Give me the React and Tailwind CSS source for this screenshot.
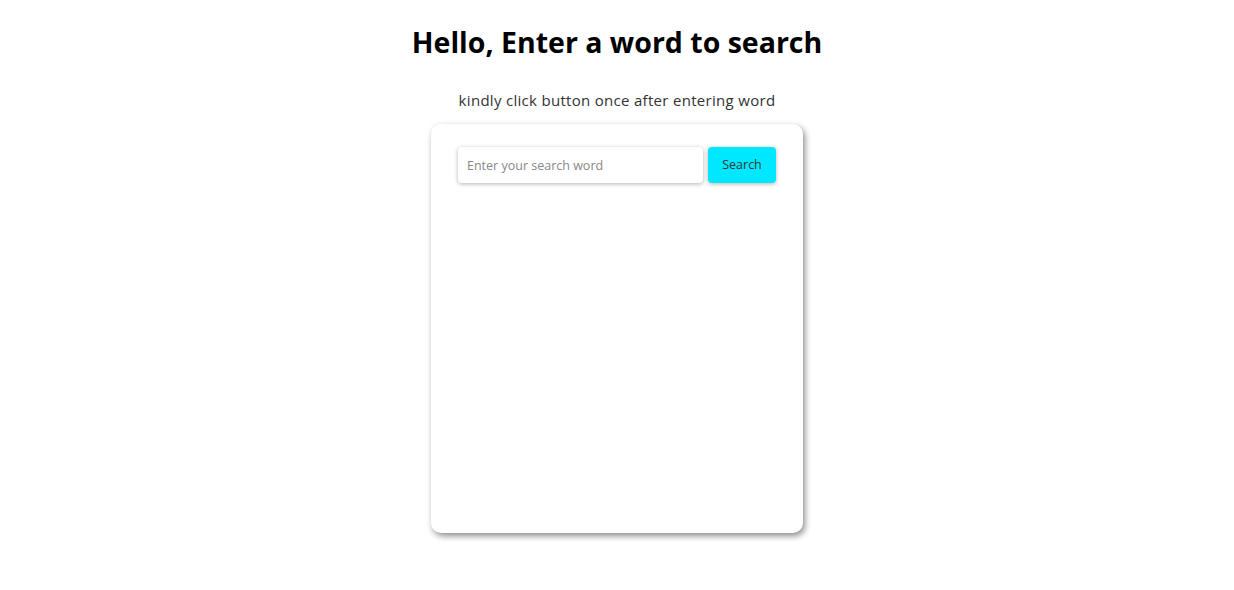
export default function App() {
  return (
    <div className="min-h-screen bg-white flex flex-col items-center font-['Open_Sans',sans-serif] text-black">
      <h1 className="mt-[24px] text-[28.5px] leading-[36px] font-bold">
        Hello, Enter a word to search
      </h1>
      <p className="mt-[30px] text-[15px] leading-[20px] text-[#333] tracking-[0.3px]">
        kindly click button once after entering word
      </p>
      <div className="mt-[14px] w-[372px] h-[409px] bg-white rounded-[10px] shadow-[2px_3px_6px_rgba(0,0,0,0.45)] px-[27px] pt-[23px]">
        <div className="flex gap-[5px]">
          <input
            type="text"
            placeholder="Enter your search word"
            className="flex-1 h-[36px] rounded-[4px] px-[9px] text-[12.5px] text-[#333] placeholder:text-[#888] shadow-[0_1px_4px_rgba(0,0,0,0.3)] outline-none"
          />
          <button className="w-[68px] h-[36px] rounded-[4px] bg-[#00e8ff] text-[12.5px] text-[#333] shadow-[0_1px_4px_rgba(0,0,0,0.3)]">
            Search
          </button>
        </div>
      </div>
    </div>
  )
}
